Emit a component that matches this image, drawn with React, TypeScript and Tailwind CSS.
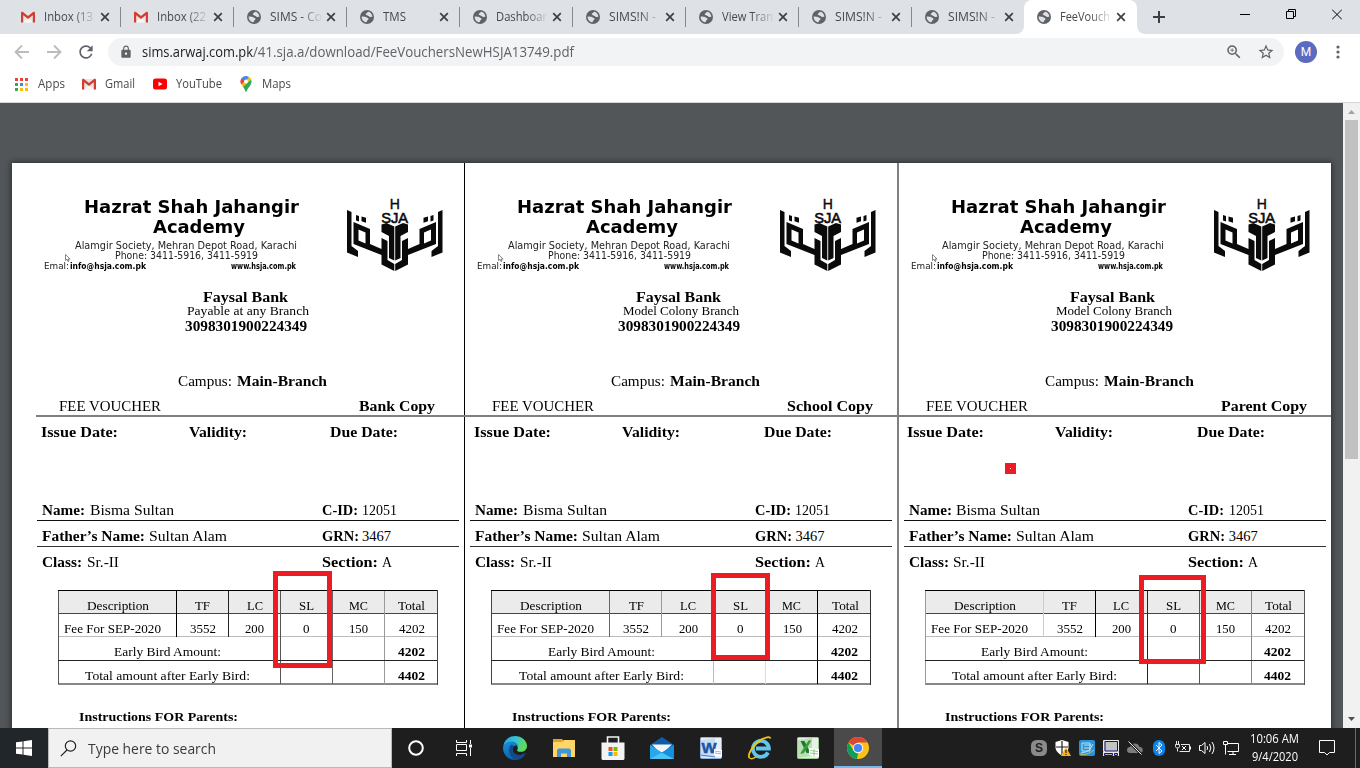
import { useLayoutEffect, useRef, useState } from "react";
import type { ReactNode } from "react";
import { MdLock, MdRefresh, MdStarBorder, MdZoomIn } from "react-icons/md";

function Run({ w, children, className = "" }: { w: number; children: ReactNode; className?: string }) {
  const ref = useRef<HTMLSpanElement>(null);
  const [scale, setScale] = useState(1);
  useLayoutEffect(() => {
    if (ref.current) setScale(w / parseFloat(getComputedStyle(ref.current).width));
  }, [w]);
  return (
    <span className={`inline-block shrink-0 whitespace-nowrap ${className}`} style={{ width: w }}>
      <span ref={ref} className="inline-block origin-left" style={{ transform: `scaleX(${scale})` }}>
        {children}
      </span>
    </span>
  );
}

function GmailIcon() {
  return (
    <svg className="h-[14px] w-[14px] shrink-0" viewBox="0 0 14 14">
      <rect x="0.5" y="2" width="13" height="10.5" rx="0.8" fill="#e8e6e4" />
      <path d="M2 12.5 7 8l5 4.5z" fill="#f7f7f7" />
      <path d="M0 3v9.5h2.2V5.2L7 9l4.8-3.8v7.3H14V3c0-1.2-1.2-1.6-2-1L7 6 2 2C1.2 1.4 0 1.8 0 3z" fill="#d23f31" />
    </svg>
  );
}

function GlobeIcon() {
  return (
    <svg className="h-[14px] w-[14px] shrink-0" viewBox="0 0 14 14">
      <circle cx="7" cy="7" r="7" fill="#5f6368" />
      <path d="M8.3 1.7C7.2 2 7.4 3 6.4 3.2 5.4 3.5 5.6 4.8 6.5 5c1 .2 1 .9 2 .9 1 0 .8 1.2 1.8 1.2.7 0 1-.5 2.1-.4C12.3 4 10.5 2.2 8.3 1.7z" fill="#dee1e6" />
      <path d="M1.6 6.6c1.8.1 3.6 0 4.7.7 1 .7 2.2.6 2.2 1.6 0 1.1-1.3.9-1.5 2-.1.7-.6 1.5-1.3 1.4C3.2 11.7 1.5 9.4 1.6 6.6z" fill="#dee1e6" />
    </svg>
  );
}

function CloseIcon() {
  return (
    <svg className="h-[10px] w-[10px] shrink-0" viewBox="0 0 10 10">
      <path d="M1.2 1.2l7.6 7.6M8.8 1.2 1.2 8.8" stroke="#3c4043" strokeWidth="1.7" />
    </svg>
  );
}

const TABS = [
  { title: "Inbox (13", w: 49, mail: true },
  { title: "Inbox (22", w: 49, mail: true },
  { title: "SIMS - Co", w: 52 },
  { title: "TMS", w: 23 },
  { title: "Dashboar", w: 51 },
  { title: "SIMS!N -", w: 47 },
  { title: "View Tran", w: 51 },
  { title: "SIMS!N -", w: 47 },
  { title: "SIMS!N -", w: 47 },
];

function TabBody({ title, w, mail }: { title: string; w: number; mail?: boolean }) {
  return (
    <>
      {mail ? <GmailIcon /> : <GlobeIcon />}
      <span className="ml-[9px] w-[53px] [mask-image:linear-gradient(to_right,black_30px,transparent_53px)]">
        <Run w={w}>{title}</Run>
      </span>
      <span className="ml-[3px] flex">
        <CloseIcon />
      </span>
    </>
  );
}

function TabStrip() {
  return (
    <div className="flex h-[34px] bg-[#dee1e6] pl-2 text-[12px] leading-[34px] text-[#45494d]">
      {TABS.map((t, i) => (
        <div key={i} className="flex w-[113px] shrink-0 items-center pl-[13px]">
          <TabBody {...t} />
          {i < TABS.length - 1 && <span className="ml-auto h-5 w-px bg-[#85898d]" />}
        </div>
      ))}
      <div className="-ml-[1px] flex">
        <svg className="-ml-2 h-[34px] w-2" viewBox="0 0 8 34">
          <path d="M0 34a8 8 0 0 0 8-8v8z" fill="#fff" />
        </svg>
        <div className="flex w-[113px] items-center rounded-t-lg bg-white pl-[13px]">
          <TabBody title="FeeVouch" w={50} />
        </div>
        <svg className="h-[34px] w-2" viewBox="0 0 8 34">
          <path d="M8 34a8 8 0 0 1-8-8v8z" fill="#fff" />
        </svg>
      </div>
      <svg className="ml-2 mt-[11px] h-3 w-3" viewBox="0 0 12 12">
        <path d="M6 0v12M0 6h12" stroke="#3c4043" strokeWidth="2" />
      </svg>
      <div className="ml-auto flex gap-9 pr-[18px] pt-[9px]">
        <svg className="h-[11px] w-[10px]" viewBox="0 0 10 11">
          <path d="M0 5.5h10" stroke="#000" />
        </svg>
        <svg className="h-[11px] w-[10px]" viewBox="0 0 10 11">
          <path d="M.5 2.5h7v7h-7zM2.5 2.5v-2h7v7h-2" fill="none" stroke="#000" />
        </svg>
        <svg className="h-[11px] w-[10px]" viewBox="0 0 10 11">
          <path d="M0 .5l10 10M10 .5l-10 10" stroke="#000" />
        </svg>
      </div>
    </div>
  );
}

function Toolbar() {
  return (
    <div className="flex h-9 items-center pl-[14px]">
      <svg className="h-4 w-4" viewBox="0 0 16 16">
        <path d="M15 8H2M8 1.5 1.5 8 8 14.5" fill="none" stroke="#babcbe" strokeWidth="1.8" />
      </svg>
      <svg className="ml-4 h-4 w-4" viewBox="0 0 16 16">
        <path d="M1 8h13M8 1.5 14.5 8 8 14.5" fill="none" stroke="#babcbe" strokeWidth="1.8" />
      </svg>
      <MdRefresh className="ml-[14px] h-5 w-5 text-[#5f6368]" />
      <div className="ml-3 flex h-7 w-[1176px] items-center rounded-full bg-[#f1f3f4] pl-[11px] pr-[9px] text-[14px]">
        <MdLock className="h-[14px] w-[14px] text-[#5f6368]" />
        <Run w={111} className="mb-[2px] ml-[9px] text-[#202124]">sims.arwaj.com.pk</Run>
        <Run w={321} className="mb-[2px] text-[#5f6368]">/41.sja.a/download/FeeVouchersNewHSJA13749.pdf</Run>
        <MdZoomIn className="ml-auto h-[18px] w-[18px] text-[#5f6368]" />
        <MdStarBorder className="ml-[14px] h-[18px] w-[18px] text-[#5f6368]" />
      </div>
      <span className="ml-[11px] flex h-[22px] w-[22px] items-center justify-center rounded-full bg-[#5c6bc0] font-[Roboto] text-[12px] text-white">
        M
      </span>
      <svg className="ml-[19px] h-[14px] w-1" viewBox="0 0 4 14">
        <circle cx="2" cy="2" r="1.6" fill="#5f6368" />
        <circle cx="2" cy="7" r="1.6" fill="#5f6368" />
        <circle cx="2" cy="12" r="1.6" fill="#5f6368" />
      </svg>
    </div>
  );
}

function Bookmarks() {
  return (
    <div className="flex h-8 items-center pb-1 pl-[15px] text-[12px] text-[#45494d]">
      <svg className="h-[13px] w-[13px]" viewBox="0 0 13 13">
        <path d="M0 0h3v3H0zM5 0h3v3H5zM10 0h3v3h-3z" fill="#ea4335" />
        <path d="M0 5h3v3H0zM0 10h3v3H0z" fill="#34a853" />
        <path d="M5 5h3v3H5z" fill="#4285f4" />
        <path d="M10 5h3v3h-3zM5 10h3v3H5zM10 10h3v3h-3z" fill="#fbbc05" />
      </svg>
      <Run w={27} className="ml-[10px]">Apps</Run>
      <span className="ml-[17px] flex"><GmailIcon /></span>
      <Run w={30} className="ml-[9px]">Gmail</Run>
      <svg className="ml-[18px] h-[14px] w-[14px]" viewBox="0 0 14 14">
        <rect y="1.5" width="14" height="11" rx="2.5" fill="#f00" />
        <path d="M5.5 4.8v4.4L9.5 7z" fill="#fff" />
      </svg>
      <Run w={46} className="ml-[9px]">YouTube</Run>
      <svg className="ml-[18px] h-4 w-3" viewBox="0 0 12 16">
        <path d="M1.7 2.1A5.3 5.3 0 0 0 1.4 8.5L6 5.5z" fill="#ea4335" />
        <path d="M9 .9 1.4 8.5l1.5 2.2 8.4-7.4A5.3 5.3 0 0 0 9 .9z" fill="#fbbc05" />
        <path d="M11.2 3.5 2.9 10.7C4.5 12.5 5 14 5.3 15.3c.2.7 1.2.7 1.4 0 .8-3.300 4.800-5.500 4.800-9.700 0-.8-.1-1.500-.3-2.100z" fill="#34a853" />
        <path d="M6 0a5.5 5.5 0 0 1 3 .9L6.5 4 4.5 5.8 1.7 2.1A5.5 5.5 0 0 1 6 0z" fill="#4285f4" />
        <circle cx="6" cy="5.5" r="1.9" fill="#fff" />
      </svg>
      <Run w={29} className="ml-[10px]">Maps</Run>
    </div>
  );
}

function SchoolLogo() {
  return (
    <svg className="h-[74px] w-[96px]" viewBox="0 0 96 74">
      <g fill="#0a0a0a">
        <text x="47.700" y="10.500" textAnchor="middle" fontSize="14" fontFamily="Liberation Sans" stroke="#0a0a0a" strokeWidth=".4">H</text>
        <text x="47.700" y="24.500" textAnchor="middle" fontSize="15.500" fontFamily="Liberation Sans" stroke="#0a0a0a" strokeWidth=".6" textLength="27" lengthAdjust="spacingAndGlyphs">SJA</text>
        {[false, true].map((flip) => (
          <g key={String(flip)} transform={flip ? "matrix(-1 0 0 1 95.500 0)" : undefined}>
            <path d="M0 12l4.500 2v34l6.500 5v6L0 54.500z" />
            <path d="M9 17l3 1v5.500l-3-1zM14.500 18.500l4.500 1.200v5l-4.500-1.500z" />
            <path fillRule="evenodd" d="M6.500 24 23 31V46l11.500 5V40l6 3V62l6.800 4v7L34.500 66.500V57L6.500 46zM11.500 31.500V42.500L18.500 45.500V34.500z" />
            <path d="M34.500 26.500l5-1.500 7.800 3.500V62.500L42 60V38l-7.500-4z" />
          </g>
        ))}
      </g>
    </svg>
  );
}

type Rules = [string, string, string, string, string, string, string];

const COPIES: {
  copy: string;
  copyW: number;
  branch: string;
  branchW: number;
  frame: string;
  inner: string;
  lead: string;
  rules: Rules;
}[] = [
  {
    copy: "Bank Copy",
    copyW: 76,
    branch: "Payable at any Branch",
    branchW: 122,
    frame: "",
    inner: "",
    lead: "ml-[5px]",
    rules: ["border-[#555]", "border-black", "border-[#222]", "border-[#555]", "border-[#666]", "border-[#999]", "border-[#444]"],
  },
  {
    copy: "School Copy",
    copyW: 86,
    branch: "Model Colony Branch",
    branchW: 116,
    frame: "border-l border-black",
    inner: "-ml-px",
    lead: "",
    rules: ["border-[#444]", "border-[#666]", "border-[#999]", "border-[#bbb]", "border-[#ddd]", "border-black", "border-[#333]"],
  },
  {
    copy: "Parent Copy",
    copyW: 86,
    branch: "Model Colony Branch",
    branchW: 116,
    frame: "-ml-px border-l-2 border-[#808080]",
    inner: "-ml-px",
    lead: "",
    rules: ["border-[#999]", "border-[#ccc]", "border-black", "border-[#222]", "border-[#555]", "border-[#888]", "border-[#555]"],
  },
];

const COLUMNS = [
  { head: "TF", headW: 15, value: "3552", valueW: 26 },
  { head: "LC", headW: 16, value: "200", valueW: 19 },
  { head: "SL", headW: 15, value: "0", valueW: 6.5 },
  { head: "MC", headW: 19, value: "150", valueW: 19 },
  { head: "Total", headW: 27, value: "4202", valueW: 26 },
];

function FeeTable({ rules }: { rules: Rules }) {
  const grid = "grid grid-cols-[118px_52px_52px_52px_52px_53px] text-center pt-[7px]";
  const cell = "-mt-[7px] pt-[7px] border-l";
  const sums = [
    { label: "Early Bird Amount:", w: 107, total: "4202", pad: "pr-[11px]" },
    { label: "Total amount after Early Bird:", w: 165, total: "4402", pad: "pr-[17px]" },
  ];
  return (
    <div className={`ml-[27px] mt-[18px] w-[380px] border-r text-[12.5px] leading-[16px] ${rules[6]}`}>
      <div className={`${grid} h-[23px] border-t border-black bg-[#ebebeb]`}>
        <div className={`${cell} pr-[3px] ${rules[0]}`}>
          <Run w={62}>Description</Run>
        </div>
        {COLUMNS.map((c, i) => (
          <div key={c.head} className={`${cell} ${rules[i + 1]}`}>
            <Run w={c.headW}>{c.head}</Run>
          </div>
        ))}
      </div>
      <div className={`${grid} h-[23px] border-t border-[#444]`}>
        <div className={`${cell} pr-[15px] ${rules[0]}`}>
          <Run w={97}>Fee For SEP-2020</Run>
        </div>
        {COLUMNS.map((c, i) => (
          <div key={c.head} className={`${cell} ${rules[i + 1]}`}>
            <Run w={c.valueW}>{c.value}</Run>
          </div>
        ))}
      </div>
      {sums.map((s, i) => (
        <div
          key={s.label}
          className={`grid grid-cols-[222px_52px_52px_53px] border-t pt-[7px] text-center ${
            i === 0 ? "h-6 border-[#bbb]" : "h-[25px] border-b-2 border-b-[#888] border-t-[#222]"
          }`}
        >
          <div className={`${cell} ${s.pad} ${rules[0]}`}>
            <Run w={s.w}>{s.label}</Run>
          </div>
          <div className={`${cell} ${rules[3]}`} />
          <div className={`${cell} ${rules[4]}`} />
          <div className={`${cell} pr-[2px] font-bold ${rules[5]}`}>
            <Run w={27}>{s.total}</Run>
          </div>
        </div>
      ))}
    </div>
  );
}

function Voucher({ data }: { data: (typeof COPIES)[number] }) {
  return (
    <div className={data.frame}>
      <div className={`flex flex-col ${data.inner}`}>
        <div className="flex h-[124px] pt-[34px] font-['DejaVu_Sans'] text-black">
          <div className="relative w-[316px] text-[9.8px] leading-[10px] text-[#222]">
            <div className="ml-[53px] h-5 text-[18.3px] font-bold leading-5 text-black">
              <Run w={215}>Hazrat Shah Jahangir</Run>
            </div>
            <div className="ml-[122px] h-5 text-[18.3px] font-bold leading-5 text-black">
              <Run w={92}>Academy</Run>
            </div>
            <div className="ml-[44px] mt-1 h-[10px]">
              <Run w={222}>Alamgir Society, Mehran Depot Road, Karachi</Run>
            </div>
            <div className="ml-[84px] h-[10px]">
              <Run w={143}>Phone: 3411-5916, 3411-5919</Run>
            </div>
            <div className="ml-[13px] flex h-[10px] text-[8.5px]">
              <Run w={25}>Emal:</Run>
              <Run w={76} className="ml-px font-bold text-black">info@hsja.com.pk</Run>
              <Run w={65} className="ml-[85px] font-bold text-black">www.hsja.com.pk</Run>
            </div>
            <svg className="absolute left-[34px] top-[57px] h-2 w-[6px]" viewBox="0 0 6 8">
              <path d="M.5.5v6l1.500-1.300L3 7.500l1-.5-.9-2h2z" fill="#fff" stroke="#555" strokeWidth=".7" />
            </svg>
          </div>
          <div className="mt-px">
            <SchoolLogo />
          </div>
        </div>
        <div className="flex h-[14px] w-[429px] justify-center font-bold leading-5">
          <Run w={85}>Faysal Bank</Run>
        </div>
        <div className="flex h-[15px] w-[433px] justify-center text-[13px] leading-[19px]">
          <Run w={data.branchW}>{data.branch}</Run>
        </div>
        <div className="flex h-5 w-[429px] justify-center font-bold leading-5">
          <Run w={122}>3098301900224349</Run>
        </div>
        <div className="ml-[147px] mt-[35px] flex h-[25px] leading-5">
          <Run w={54}>Campus:</Run>
          <Run w={90} className="ml-[5px] font-bold">Main-Branch</Run>
        </div>
        <div className="flex h-[19px] leading-5">
          <Run w={102} className="ml-7">FEE VOUCHER</Run>
          <div className="ml-[186px] flex w-[100px] justify-center font-bold">
            <Run w={data.copyW}>{data.copy}</Run>
          </div>
        </div>
        <div className={`h-[2px] bg-[#808080] ${data.lead}`} />
        <div className="mt-[5px] flex h-5 font-bold leading-5">
          <Run w={77} className="ml-[9.6px]">Issue Date:</Run>
          <Run w={58} className="ml-[71px]">Validity:</Run>
          <Run w={68} className="ml-[83.6px]">Due Date:</Run>
        </div>
        <div className="ml-[6px] mt-[58px] flex h-[21px] w-[422px] border-b border-[#111] pl-[5px] leading-5">
          <Run w={43} className="font-bold">Name:</Run>
          <Run w={84} className="ml-[4.5px]">Bisma Sultan</Run>
          <Run w={36} className="ml-[148px] font-bold">C-ID:</Run>
          <Run w={35} className="ml-[4.5px]">12051</Run>
        </div>
        <div className="ml-[6px] mt-[5px] flex h-[21px] w-[422px] border-b border-[#333] pl-[5px] leading-5">
          <Run w={103} className="font-bold">Father’s Name:</Run>
          <Run w={78} className="ml-[4px]">Sultan Alam</Run>
          <Run w={37} className="ml-[94.5px] font-bold">GRN:</Run>
          <Run w={29} className="ml-[3.5px]">3467</Run>
        </div>
        <div className="ml-[11px] mt-[5px] flex h-5 leading-5">
          <Run w={40} className="font-bold">Class:</Run>
          <Run w={32} className="ml-[4.5px]">Sr.-II</Run>
          <Run w={56} className="ml-[203px] font-bold">Section:</Run>
          <Run w={10} className="ml-[4px]">A</Run>
        </div>
        <FeeTable rules={data.rules} />
        <div className="ml-[47.5px] mt-[22px] text-[13px] font-bold leading-5">
          <Run w={159}>Instructions FOR Parents:</Run>
        </div>
      </div>
    </div>
  );
}

function Viewer() {
  return (
    <div className="flex h-[625px]">
      <div className="relative w-[1343px] overflow-hidden bg-[#525659] pl-3 pt-[60px]">
        <div className="grid h-[700px] w-[1319px] grid-cols-[433.4px_433.4px_433.4px] bg-white pl-[19px] font-['Liberation_Serif'] text-[14.5px] text-black shadow-[0_0_6px_1px_rgba(0,0,0,0.45)]">
          {COPIES.map((c) => (
            <Voucher key={c.copy} data={c} />
          ))}
        </div>
        <div className="absolute left-[273px] top-[468px] h-[97px] w-[59px] border-[5px] border-[#ed1c24]" />
        <div className="absolute left-[711px] top-[470px] h-[87px] w-[59px] border-[5px] border-[#ed1c24]" />
        <div className="absolute left-[1139px] top-[472px] h-[89px] w-[67px] border-[5px] border-[#ed1c24]" />
        <div className="absolute left-[1005px] top-[360px] h-[11px] w-[11px] border-[5px] border-[#ed1c24] bg-white" />
      </div>
      <div className="flex w-[17px] flex-col items-center bg-[#f1f1f1]">
        <svg className="h-[17px] w-[17px]" viewBox="0 0 17 17">
          <path d="M5 11h7L8.5 7z" fill="#a3a3a3" />
        </svg>
        <div className="h-[339px] w-[13px] bg-[#c1c1c1]" />
        <svg className="mt-auto h-[17px] w-[17px]" viewBox="0 0 17 17">
          <path d="M5 6h7l-3.500 4z" fill="#505050" />
        </svg>
      </div>
    </div>
  );
}

function AppIcons() {
  const slot = "flex w-[49px] shrink-0 items-center justify-center";
  return (
    <>
      <div className="flex w-12 items-center justify-center">
        <svg className="h-4 w-4" viewBox="0 0 16 16">
          <circle cx="8" cy="8" r="6.8" fill="none" stroke="#fff" strokeWidth="2" />
        </svg>
      </div>
      <div className="flex w-[47px] items-center justify-center">
        <svg className="h-4 w-4" viewBox="0 0 16 16" fill="none" stroke="#fff">
          <path d="M.5 0v2.500h10V0M.5 16v-2.500h10V16M.5 4.500h10v6H.5zM14.500 0v4M14.500 8v8" />
          <path d="M13 4.500h3v3h-3z" fill="#fff" stroke="none" />
        </svg>
      </div>
      <div className="flex w-[52px] items-center justify-center pl-[3px]">
        <svg className="h-6 w-6" viewBox="0 0 24 24">
          <defs>
            <linearGradient id="edgeTop" x1="0" y1="0" x2="1" y2="0.3">
              <stop offset="0" stopColor="#1a9fe0" />
              <stop offset="0.5" stopColor="#35c1d8" />
              <stop offset="1" stopColor="#5fdc5a" />
            </linearGradient>
            <linearGradient id="edgeBody" x1="0" y1="0" x2="0.6" y2="1">
              <stop offset="0" stopColor="#1b8fdd" />
              <stop offset="1" stopColor="#0c59a4" />
            </linearGradient>
          </defs>
          <path d="M.3 10C1.2 4 6 0 12 0c6.500 0 12 4.600 12 10 0 3.500-2.800 5.800-6 5.800-2.500 0-4.500-.8-3.800-1.800 1.300-2 .6-6.500-4.700-6.500C5 7.500 1.500 8.500.3 10z" fill="url(#edgeTop)" />
          <path d="M0 12C0 8 4.500 5.600 8.500 5.600c3.500 0 6 2 6.300 4.400C13 8.800 9.500 10 9.500 13.500c0 4 4.500 6 8 5.500 2-.3 3.500-1 5-2-1.500 4-5.500 7-10.500 7C5.300 24 0 18.700 0 12z" fill="url(#edgeBody)" />
          <path d="M8.500 8.500C5.500 11 5 16 8 20c2 2.500 4.500 3.700 6.500 3.700 3.500-.7 6.500-3 8-6.700-1.500 1-3 1.700-5 2-3.500.5-8-1.500-8-5.500 0-1.500.6-2.700 1.500-3.500z" fill="#124a8c" />
        </svg>
      </div>
      <div className={slot}>
        <svg className="h-[18px] w-[22px]" viewBox="0 0 22 18">
          <path d="M0 0h9l1.500 1.500V4H0z" fill="#e3a21a" />
          <path d="M0 3h9l2-2h11v17H0z" fill="#ffd568" />
          <path d="M4 18v-7l1.500-1.500h11L18 11v7h-4v-3.500H8V18z" fill="#3f96d8" />
        </svg>
      </div>
      <div className={slot}>
        <svg className="h-6 w-6" viewBox="0 0 24 24">
          <path d="M6.500 7V1h11v6" fill="none" stroke="#f3f3f3" strokeWidth="1.6" />
          <path d="M.5 6.500h23V23l-1 1h-21l-1-1z" fill="#f3f3f3" />
          <path d="M7.500 11h4v4h-4z" fill="#f25022" />
          <path d="M12.500 11h4v4h-4z" fill="#7fba00" />
          <path d="M7.500 16h4v4h-4z" fill="#00a4ef" />
          <path d="M12.500 16h4v4h-4z" fill="#ffb900" />
        </svg>
      </div>
      <div className={slot}>
        <svg className="h-[22px] w-6" viewBox="0 0 24 22">
          <path d="M0 8l12-8 12 8v4H0z" fill="#0f5da8" />
          <path d="M2 7.500h20L14 15H9z" fill="#f5f5f5" />
          <path d="M0 8v14h24V8l-12 7.500z" fill="#28a8ea" />
          <path d="M0 22 12 15.500 24 22z" fill="#4cc4f7" />
          <path d="M24 8v14L12 15.500z" fill="#1590dc" />
        </svg>
      </div>
      <div className={slot}>
        <svg className="h-[22px] w-[22px]" viewBox="0 0 22 22">
          <rect x=".5" y=".5" width="21" height="21" rx="1" fill="#e7effa" stroke="#8eb0dd" />
          <path d="M1 21V3l14-2v18z" fill="#c9dcf3" />
          <text x="1.500" y="15.500" fontFamily="Liberation Sans" fontWeight="bold" fontSize="15" fill="#1d55a5" stroke="#1d55a5" strokeWidth=".5" textLength="15" lengthAdjust="spacingAndGlyphs">W</text>
          <path d="M14 12l8 1v7l-8-2z" fill="#fff" />
          <path d="M15 14l6 1M15 16l6 1" stroke="#7a9fd0" strokeWidth=".8" />
          <path d="M1 18l14 2" stroke="#4b7fc4" />
        </svg>
      </div>
      <div className={slot}>
        <svg className="h-6 w-6" viewBox="0 0 24 24">
          <path d="M20 16.500a8 8 0 1 1 .9-4H8" fill="none" stroke="#5cc8f0" strokeWidth="3.800" />
          <path d="M1.500 22C-1 19 5 9 12 4.500 17 1.200 22 0 22.500 2.500" fill="none" stroke="#f4c20d" strokeWidth="1.800" />
          <path d="M1.500 22c2 1.500 5 0 7-1.500" fill="none" stroke="#f4c20d" strokeWidth="1.500" />
        </svg>
      </div>
      <div className="flex w-[50px] items-center justify-center pr-[2px]">
        <svg className="h-[22px] w-[22px]" viewBox="0 0 22 22">
          <rect x=".5" y=".5" width="21" height="21" rx="1" fill="#e6f3e4" stroke="#9ccc96" />
          <path d="M1 21V3l14-2v18z" fill="#b9dfb2" />
          <path d="M3.500 4h4l6 12h-4z" fill="#1f7a2e" />
          <path d="M11.500 3.500h3l-8 13H3.200z" fill="#3c9a3f" />
          <path d="M12 11l10 1v8l-10-2z" fill="#fff" />
          <path d="M13 13.500l8 1M13 16l8 1M17 12v7" stroke="#7fb77a" strokeWidth=".8" />
        </svg>
      </div>
      <div className="flex w-12 items-center justify-center border-b-2 border-[#76b9ed] bg-[#4a4a4a]">
        <svg className="mt-[2px] h-[22px] w-[22px]" viewBox="0 0 22 22">
          <circle cx="11" cy="11" r="11" fill="#fbc116" />
          <path d="M11 11 1.500 5.500A11 11 0 0 1 20.500 5.500H11z" fill="#db4437" />
          <path d="M1.500 5.500 6.800 14 11 16.500 10 22A11 11 0 0 1 1.500 5.500z" fill="#0f9d58" />
          <circle cx="11" cy="11" r="5.2" fill="#f1f1f1" />
          <circle cx="11" cy="11" r="4.1" fill="#4285f4" />
        </svg>
      </div>
    </>
  );
}

function Tray() {
  const icon = "h-4 w-4";
  return (
    <div className="ml-auto flex items-center">
      <div className="flex gap-2">
        <svg className={icon} viewBox="0 0 16 16">
          <rect width="16" height="16" rx="5.5" fill="#8a8a8a" />
          <text x="8" y="12.300" textAnchor="middle" fontFamily="Liberation Sans" fontWeight="bold" fontSize="12" fill="#1f1f1f">S</text>
        </svg>
        <svg className={icon} viewBox="0 0 16 16">
          <path d="M7 0l6.500 2v5c0 4-3 6.500-6.500 8.500C3.500 13.500.5 11 .5 7V2z" fill="#fff" />
          <path d="M7 1v14M1 7h12" stroke="#1f1f1f" strokeWidth="1.2" />
          <path d="M11 7l5 9H6z" fill="#fbb416" />
          <path d="M11 10v3M11 14v1" stroke="#222" strokeWidth="1.2" />
        </svg>
        <svg className={icon} viewBox="0 0 16 16">
          <rect width="16" height="16" rx="2" fill="#2a93d5" />
          <path d="M3 3h8v8H3zM5 5h7M5 8h6M2 13c4-1 7-1 9-4l3-5" fill="none" stroke="#bfe3f7" />
          <path d="M1 14c5 1 9 0 14-4" fill="none" stroke="#d9c24a" />
        </svg>
        <svg className={icon} viewBox="0 0 16 16">
          <path d="M.5.5h15v11H.5z" fill="#c3c3c3" stroke="#e9e9e9" />
          <path d="M2 1.500h12.500V11H2z" fill="#c3c3c3" stroke="#14147a" />
          <path d="M0 12h16v4H0z" fill="#e9e9e9" />
          <path d="M1.500 13.500h8v2h-8zM11.500 13.500h3v2h-3z" fill="#aaa" stroke="#14147a" />
        </svg>
        <svg className={icon} viewBox="0 0 16 16">
          <path d="M3 13a3 3 0 0 1 0-6 5 5 0 0 1 9.500 0A3 3 0 0 1 13 13z" fill="#7d7d7d" />
          <path d="M1 1l14 14" stroke="#1f1f1f" strokeWidth="2.5" />
          <path d="M1.500 1.500l13 13" stroke="#eee" />
        </svg>
        <svg className={icon} viewBox="0 0 16 16">
          <rect x="2" width="12" height="16" rx="6" fill="#0a84ee" />
          <path d="M5 5l6 6-3 2.500v-11L11 5l-6 6" fill="none" stroke="#fff" />
        </svg>
        <svg className={icon} viewBox="0 0 16 16" fill="none" stroke="#fff">
          <path d="M1.500 1v3M3.500 1v3M.5 4.500h4v2l-1 1.500h-2l-1-1.500zM2.500 8.500v3M6 4.500h8.500v7H4.500" strokeWidth=".9" />
          <path d="M7 6l4 4M11 6l-4 4" />
          <path d="M15.500 6.500v3" />
        </svg>
        <svg className={icon} viewBox="0 0 16 16" fill="none" stroke="#fff">
          <path d="M.5 5.500h2l3.500-3v11l-3.500-3h-2zM8 6q1.300 2 0 4M10.500 4q2.600 4 0 8M13 2q4 6 0 12" />
        </svg>
        <svg className={icon} viewBox="0 0 16 16" fill="none" stroke="#fff">
          <path d="M4 3.500h11.500v8H4.500M10 11.500v3M6 14.500h7M.5 1.500h4v3h-4zM2.500 4.500v10" />
        </svg>
      </div>
      <div className="ml-[11px] flex flex-col items-center text-[12px] leading-[18px] text-white">
        <Run w={49}>10:06 AM</Run>
        <Run w={46}>9/4/2020</Run>
      </div>
      <svg className="ml-5 h-4 w-4" viewBox="0 0 16 16">
        <path d="M.5.5h15v12H10.500L8 15l-2.500-2.500h-5z" fill="none" stroke="#fff" />
      </svg>
      <span className="ml-5 mr-1 h-10 w-px bg-[#6a6a6a]" />
    </div>
  );
}

function Taskbar() {
  return (
    <div className="flex h-10 bg-[#1e1e1e]">
      <div className="flex w-12 items-center justify-center bg-[#20262a]">
        <svg className="h-4 w-4" viewBox="0 0 16 16">
          <path d="M0 2.300 6.500 1.400v6.100H0zM7.500 1.200 16 0v7.500H7.500zM0 8.500h6.500v6.100L0 13.700zM7.500 8.500H16V16l-8.500-1.200z" fill="#fff" />
        </svg>
      </div>
      <div className="flex w-[344px] items-center border border-[#b9b9b9] bg-[#f1f1f1] pl-[11px] text-[15px] text-[#3a3a3a]">
        <svg className="h-[17px] w-[17px]" viewBox="0 0 17 17">
          <circle cx="10.5" cy="6" r="5.2" fill="none" stroke="#222" strokeWidth="1.2" />
          <path d="M7 10 .8 16.200" stroke="#222" strokeWidth="1.2" />
        </svg>
        <Run w={128} className="ml-[11px]">Type here to search</Run>
      </div>
      <AppIcons />
      <Tray />
    </div>
  );
}

export default function App() {
  return (
    <div className="h-[768px] w-[1360px] overflow-hidden bg-white font-['Open_Sans',sans-serif]">
      <TabStrip />
      <Toolbar />
      <Bookmarks />
      <div className="h-px bg-[#d5d7da]" />
      <Viewer />
      <Taskbar />
    </div>
  );
}
